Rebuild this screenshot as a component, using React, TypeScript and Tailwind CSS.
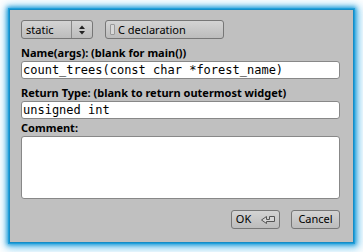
import React from "react";

const sans = { fontFamily: '"Noto Sans", sans-serif' };
const mono = { fontFamily: '"DejaVu Sans Mono", monospace' };

const ReturnArrow = () => (
  <svg width="15" height="10" viewBox="0 0 15 10" className="ml-[9px]">
    <path
      d="M14.5 1.5 H9.5 V4.5 H6.5 V1.5 L1.5 5 L6.5 8.5 V6.5 H14.5 Z"
      fill="#d6d6d6"
      stroke="#555"
      strokeWidth="1"
    />
  </svg>
);

const Label = ({ text, className }: { text: string; className: string }) => (
  <div className={"flex items-end text-[11px] leading-[13px] font-bold text-black " + className} style={sans}>
    {text}
  </div>
);

const btn = "h-[19px] rounded-[3px] border border-[#777] bg-gradient-to-b from-[#d4d4d4] to-[#bcbcbc]";

export default function App() {
  return (
    <div className="w-[363px] h-[252px] bg-white overflow-hidden pt-[9px] pl-[9px]">
      <div className="w-[345px] h-[234px] bg-[#c0c0c0] border border-[#158cc6] shadow-[0_0_0_1px_#22a0da,0_0_4px_2px_rgba(20,150,215,0.9),1px_1px_9px_4px_rgba(60,175,230,0.65)] flex flex-col pl-[11px] pr-[13px] pt-[10px]">
        <div className="flex gap-[12px] h-[19px]">
          <div className={"w-[72px] flex " + btn} style={sans}>
            <div className="flex-1 text-[11px] leading-[17px] pl-[4px] text-black">static</div>
            <div className="w-[21px] border-l border-[#888] flex items-center justify-center">
              <svg width="6" height="10" viewBox="0 0 6 10">
                <path d="M0 4 L3 0.5 L6 4 Z" fill="#222" />
                <path d="M0 6 L3 9.5 L6 6 Z" fill="#222" />
              </svg>
            </div>
          </div>
          <div className={"w-[119px] flex items-center pl-[4px] " + btn} style={sans}>
            <div className="w-[5px] h-[11px] border border-[#999] bg-[#d8d8d8] rounded-[1px]" />
            <span className="text-[11px] leading-[17px] text-black ml-[3px]">C declaration</span>
          </div>
        </div>
        <Label text="Name(args): (blank for main())" className="h-[22px] pb-[2px]" />
        <div className="h-[18px] bg-white border border-[#888] rounded-[3px] text-[12px] leading-[16px] pl-[1px] text-black" style={mono}>
          count_trees(const char *forest_name)
        </div>
        <Label text="Return Type: (blank to return outermost widget)" className="h-[22px] pb-[2px]" />
        <div className="h-[18px] bg-white border border-[#888] rounded-[3px] text-[12px] leading-[16px] pl-[1px] text-black" style={mono}>
          unsigned int
        </div>
        <Label text="Comment:" className="h-[17px] pb-[2px]" />
        <div className="h-[63px] bg-white border border-[#888] rounded-[3px]" />
        <div className="flex justify-end gap-[11px] mt-[11px]">
          <div className={"w-[49px] flex items-center justify-center text-[11px] text-black " + btn} style={sans}>
            OK
            <ReturnArrow />
          </div>
          <div className={"w-[49px] flex items-center justify-center text-[11px] text-black " + btn} style={sans}>
            Cancel
          </div>
        </div>
      </div>
    </div>
  );
}
